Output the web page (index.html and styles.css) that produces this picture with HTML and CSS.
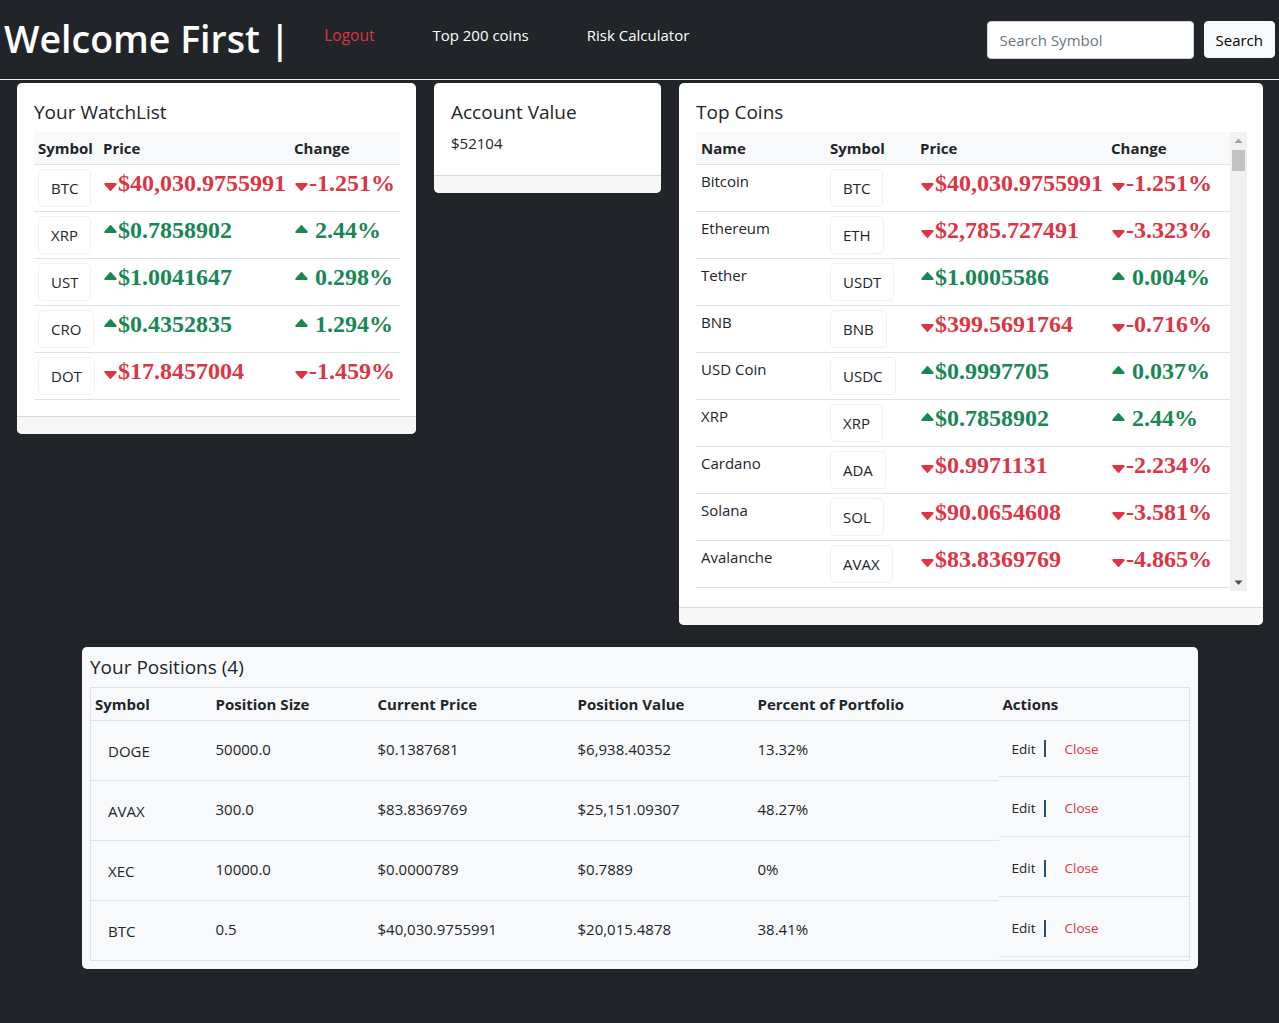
FILE: index.html
```html
<!DOCTYPE html>
<html lang="en">
<head>
<meta charset="utf-8">
<title>Welcome First</title>
<link rel="stylesheet" href="styles.css">
</head>
<body>
<nav class="navbar">
  <div class="brand">Welcome First |</div>
  <div class="nav-links">
    <a class="nav-link logout" href="#">Logout</a>
    <a class="nav-link" href="#">Top 200 coins</a>
    <a class="nav-link" href="#">Risk Calculator</a>
  </div>
  <form class="search">
    <input class="search-input" type="text" placeholder="Search Symbol">
    <button class="search-btn" type="button">Search</button>
  </form>
</nav>

<main class="main">
  <div class="card-row">
    <section class="card card-watch">
      <div class="card-body">
        <h5 class="card-title">Your WatchList</h5>
        <table class="tbl">
          <colgroup><col style="width:65px"><col style="width:191px"><col></colgroup>
          <thead><tr><th>Symbol</th><th>Price</th><th>Change</th></tr></thead>
          <tbody>
            <tr><td><span class="sym">BTC</span></td><td><span class="big down"><svg class="cd" viewBox="1.9 4 12.2 7.5"><path d="M7.247 11.14 2.451 5.658C1.885 5.013 2.345 4 3.204 4h9.592a1 1 0 0 1 .753 1.659l-4.796 5.48a1 1 0 0 1-1.506 0z"/></svg>$40,030.9755991</span></td><td><span class="big down"><svg class="cd" viewBox="1.9 4 12.2 7.5"><path d="M7.247 11.14 2.451 5.658C1.885 5.013 2.345 4 3.204 4h9.592a1 1 0 0 1 .753 1.659l-4.796 5.48a1 1 0 0 1-1.506 0z"/></svg>-1.251%</span></td></tr>
            <tr><td><span class="sym">XRP</span></td><td><span class="big up"><svg class="cu" viewBox="1.9 4.5 12.2 7.5"><path d="m7.247 4.86-4.796 5.481c-.566.647-.106 1.659.753 1.659h9.592a1 1 0 0 0 .753-1.659l-4.796-5.48a1 1 0 0 0-1.506 0z"/></svg>$0.7858902</span></td><td><span class="big up"><svg class="cu" viewBox="1.9 4.5 12.2 7.5"><path d="m7.247 4.86-4.796 5.481c-.566.647-.106 1.659.753 1.659h9.592a1 1 0 0 0 .753-1.659l-4.796-5.48a1 1 0 0 0-1.506 0z"/></svg> 2.44%</span></td></tr>
            <tr><td><span class="sym">UST</span></td><td><span class="big up"><svg class="cu" viewBox="1.9 4.5 12.2 7.5"><path d="m7.247 4.86-4.796 5.481c-.566.647-.106 1.659.753 1.659h9.592a1 1 0 0 0 .753-1.659l-4.796-5.48a1 1 0 0 0-1.506 0z"/></svg>$1.0041647</span></td><td><span class="big up"><svg class="cu" viewBox="1.9 4.5 12.2 7.5"><path d="m7.247 4.86-4.796 5.481c-.566.647-.106 1.659.753 1.659h9.592a1 1 0 0 0 .753-1.659l-4.796-5.48a1 1 0 0 0-1.506 0z"/></svg> 0.298%</span></td></tr>
            <tr><td><span class="sym">CRO</span></td><td><span class="big up"><svg class="cu" viewBox="1.9 4.5 12.2 7.5"><path d="m7.247 4.86-4.796 5.481c-.566.647-.106 1.659.753 1.659h9.592a1 1 0 0 0 .753-1.659l-4.796-5.48a1 1 0 0 0-1.506 0z"/></svg>$0.4352835</span></td><td><span class="big up"><svg class="cu" viewBox="1.9 4.5 12.2 7.5"><path d="m7.247 4.86-4.796 5.481c-.566.647-.106 1.659.753 1.659h9.592a1 1 0 0 0 .753-1.659l-4.796-5.48a1 1 0 0 0-1.506 0z"/></svg> 1.294%</span></td></tr>
            <tr><td><span class="sym">DOT</span></td><td><span class="big down"><svg class="cd" viewBox="1.9 4 12.2 7.5"><path d="M7.247 11.14 2.451 5.658C1.885 5.013 2.345 4 3.204 4h9.592a1 1 0 0 1 .753 1.659l-4.796 5.48a1 1 0 0 1-1.506 0z"/></svg>$17.8457004</span></td><td><span class="big down"><svg class="cd" viewBox="1.9 4 12.2 7.5"><path d="M7.247 11.14 2.451 5.658C1.885 5.013 2.345 4 3.204 4h9.592a1 1 0 0 1 .753 1.659l-4.796 5.48a1 1 0 0 1-1.506 0z"/></svg>-1.459%</span></td></tr>
          </tbody>
        </table>
      </div>
      <div class="card-footer"></div>
    </section>

    <section class="card card-account">
      <div class="card-body body-account">
        <h5 class="card-title">Account Value</h5>
        <p class="account-value">$52104</p>
      </div>
      <div class="card-footer"></div>
    </section>

    <section class="card card-top">
      <div class="card-body">
        <h5 class="card-title">Top Coins</h5>
        <div class="scroll-box">
          <div class="scroll-content">
            <table class="tbl">
              <colgroup><col style="width:130px"><col style="width:90px"><col style="width:191px"><col></colgroup>
              <thead><tr><th class="first">Name</th><th>Symbol</th><th>Price</th><th>Change</th></tr></thead>
              <tbody>
                <tr><td class="name">Bitcoin</td><td><span class="sym">BTC</span></td><td><span class="big down"><svg class="cd" viewBox="1.9 4 12.2 7.5"><path d="M7.247 11.14 2.451 5.658C1.885 5.013 2.345 4 3.204 4h9.592a1 1 0 0 1 .753 1.659l-4.796 5.48a1 1 0 0 1-1.506 0z"/></svg>$40,030.9755991</span></td><td><span class="big down"><svg class="cd" viewBox="1.9 4 12.2 7.5"><path d="M7.247 11.14 2.451 5.658C1.885 5.013 2.345 4 3.204 4h9.592a1 1 0 0 1 .753 1.659l-4.796 5.48a1 1 0 0 1-1.506 0z"/></svg>-1.251%</span></td></tr>
                <tr><td class="name">Ethereum</td><td><span class="sym">ETH</span></td><td><span class="big down"><svg class="cd" viewBox="1.9 4 12.2 7.5"><path d="M7.247 11.14 2.451 5.658C1.885 5.013 2.345 4 3.204 4h9.592a1 1 0 0 1 .753 1.659l-4.796 5.48a1 1 0 0 1-1.506 0z"/></svg>$2,785.727491</span></td><td><span class="big down"><svg class="cd" viewBox="1.9 4 12.2 7.5"><path d="M7.247 11.14 2.451 5.658C1.885 5.013 2.345 4 3.204 4h9.592a1 1 0 0 1 .753 1.659l-4.796 5.48a1 1 0 0 1-1.506 0z"/></svg>-3.323%</span></td></tr>
                <tr><td class="name">Tether</td><td><span class="sym">USDT</span></td><td><span class="big up"><svg class="cu" viewBox="1.9 4.5 12.2 7.5"><path d="m7.247 4.86-4.796 5.481c-.566.647-.106 1.659.753 1.659h9.592a1 1 0 0 0 .753-1.659l-4.796-5.48a1 1 0 0 0-1.506 0z"/></svg>$1.0005586</span></td><td><span class="big up"><svg class="cu" viewBox="1.9 4.5 12.2 7.5"><path d="m7.247 4.86-4.796 5.481c-.566.647-.106 1.659.753 1.659h9.592a1 1 0 0 0 .753-1.659l-4.796-5.48a1 1 0 0 0-1.506 0z"/></svg> 0.004%</span></td></tr>
                <tr><td class="name">BNB</td><td><span class="sym">BNB</span></td><td><span class="big down"><svg class="cd" viewBox="1.9 4 12.2 7.5"><path d="M7.247 11.14 2.451 5.658C1.885 5.013 2.345 4 3.204 4h9.592a1 1 0 0 1 .753 1.659l-4.796 5.48a1 1 0 0 1-1.506 0z"/></svg>$399.5691764</span></td><td><span class="big down"><svg class="cd" viewBox="1.9 4 12.2 7.5"><path d="M7.247 11.14 2.451 5.658C1.885 5.013 2.345 4 3.204 4h9.592a1 1 0 0 1 .753 1.659l-4.796 5.48a1 1 0 0 1-1.506 0z"/></svg>-0.716%</span></td></tr>
                <tr><td class="name">USD Coin</td><td><span class="sym">USDC</span></td><td><span class="big up"><svg class="cu" viewBox="1.9 4.5 12.2 7.5"><path d="m7.247 4.86-4.796 5.481c-.566.647-.106 1.659.753 1.659h9.592a1 1 0 0 0 .753-1.659l-4.796-5.48a1 1 0 0 0-1.506 0z"/></svg>$0.9997705</span></td><td><span class="big up"><svg class="cu" viewBox="1.9 4.5 12.2 7.5"><path d="m7.247 4.86-4.796 5.481c-.566.647-.106 1.659.753 1.659h9.592a1 1 0 0 0 .753-1.659l-4.796-5.48a1 1 0 0 0-1.506 0z"/></svg> 0.037%</span></td></tr>
                <tr><td class="name">XRP</td><td><span class="sym">XRP</span></td><td><span class="big up"><svg class="cu" viewBox="1.9 4.5 12.2 7.5"><path d="m7.247 4.86-4.796 5.481c-.566.647-.106 1.659.753 1.659h9.592a1 1 0 0 0 .753-1.659l-4.796-5.48a1 1 0 0 0-1.506 0z"/></svg>$0.7858902</span></td><td><span class="big up"><svg class="cu" viewBox="1.9 4.5 12.2 7.5"><path d="m7.247 4.86-4.796 5.481c-.566.647-.106 1.659.753 1.659h9.592a1 1 0 0 0 .753-1.659l-4.796-5.48a1 1 0 0 0-1.506 0z"/></svg> 2.44%</span></td></tr>
                <tr><td class="name">Cardano</td><td><span class="sym">ADA</span></td><td><span class="big down"><svg class="cd" viewBox="1.9 4 12.2 7.5"><path d="M7.247 11.14 2.451 5.658C1.885 5.013 2.345 4 3.204 4h9.592a1 1 0 0 1 .753 1.659l-4.796 5.48a1 1 0 0 1-1.506 0z"/></svg>$0.9971131</span></td><td><span class="big down"><svg class="cd" viewBox="1.9 4 12.2 7.5"><path d="M7.247 11.14 2.451 5.658C1.885 5.013 2.345 4 3.204 4h9.592a1 1 0 0 1 .753 1.659l-4.796 5.48a1 1 0 0 1-1.506 0z"/></svg>-2.234%</span></td></tr>
                <tr><td class="name">Solana</td><td><span class="sym">SOL</span></td><td><span class="big down"><svg class="cd" viewBox="1.9 4 12.2 7.5"><path d="M7.247 11.14 2.451 5.658C1.885 5.013 2.345 4 3.204 4h9.592a1 1 0 0 1 .753 1.659l-4.796 5.48a1 1 0 0 1-1.506 0z"/></svg>$90.0654608</span></td><td><span class="big down"><svg class="cd" viewBox="1.9 4 12.2 7.5"><path d="M7.247 11.14 2.451 5.658C1.885 5.013 2.345 4 3.204 4h9.592a1 1 0 0 1 .753 1.659l-4.796 5.48a1 1 0 0 1-1.506 0z"/></svg>-3.581%</span></td></tr>
                <tr><td class="name">Avalanche</td><td><span class="sym">AVAX</span></td><td><span class="big down"><svg class="cd" viewBox="1.9 4 12.2 7.5"><path d="M7.247 11.14 2.451 5.658C1.885 5.013 2.345 4 3.204 4h9.592a1 1 0 0 1 .753 1.659l-4.796 5.48a1 1 0 0 1-1.506 0z"/></svg>$83.8369769</span></td><td><span class="big down"><svg class="cd" viewBox="1.9 4 12.2 7.5"><path d="M7.247 11.14 2.451 5.658C1.885 5.013 2.345 4 3.204 4h9.592a1 1 0 0 1 .753 1.659l-4.796 5.48a1 1 0 0 1-1.506 0z"/></svg>-4.865%</span></td></tr>
              </tbody>
            </table>
          </div>
          <div class="fake-scrollbar">
            <svg class="sb-arrow" viewBox="0 0 17 17"><path d="M4.5 11h8L8.5 6.5z" fill="#a3a3a3"/></svg>
            <div class="sb-thumb"></div>
            <div class="sb-track"></div>
            <svg class="sb-arrow" viewBox="0 0 17 17"><path d="M4.5 6.5h8L8.5 11z" fill="#505050"/></svg>
          </div>
        </div>
      </div>
      <div class="card-footer"></div>
    </section>
  </div>

  <section class="card card-positions">
    <h5 class="card-title">Your Positions (4)</h5>
    <table class="pos">
      <colgroup><col style="width:121px"><col style="width:162px"><col style="width:200px"><col style="width:180px"><col style="width:245px"><col></colgroup>
      <thead><tr><th>Symbol</th><th>Position Size</th><th>Current Price</th><th>Position Value</th><th>Percent of Portfolio</th><th>Actions</th></tr></thead>
      <tbody>
        <tr><td><span class="sym plain">DOGE</span></td><td class="lift">50000.0</td><td class="lift">$0.1387681</td><td class="lift">$6,938.40352</td><td class="lift">13.32%</td><td class="act"><div class="act-inner"><a class="edit" href="#">Edit</a><span class="sep"></span><a class="close" href="#">Close</a></div></td></tr>
        <tr><td><span class="sym plain">AVAX</span></td><td class="lift">300.0</td><td class="lift">$83.8369769</td><td class="lift">$25,151.09307</td><td class="lift">48.27%</td><td class="act"><div class="act-inner"><a class="edit" href="#">Edit</a><span class="sep"></span><a class="close" href="#">Close</a></div></td></tr>
        <tr><td><span class="sym plain">XEC</span></td><td class="lift">10000.0</td><td class="lift">$0.0000789</td><td class="lift">$0.7889</td><td class="lift">0%</td><td class="act"><div class="act-inner"><a class="edit" href="#">Edit</a><span class="sep"></span><a class="close" href="#">Close</a></div></td></tr>
        <tr><td><span class="sym plain">BTC</span></td><td class="lift">0.5</td><td class="lift">$40,030.9755991</td><td class="lift">$20,015.4878</td><td class="lift">38.41%</td><td class="act"><div class="act-inner"><a class="edit" href="#">Edit</a><span class="sep"></span><a class="close" href="#">Close</a></div></td></tr>
      </tbody>
    </table>
  </section>
</main>
</body>
</html>
```
FILE: styles.css
```css
* { box-sizing: border-box; }

html, body {
  margin: 0;
  background: #212529;
}

body {
  font-family: "Open Sans", "Noto Sans", "DejaVu Sans", sans-serif;
  font-size: 15px;
  line-height: 24px;
  color: #212529;
  min-height: 1023px;
}

/* ---------- navbar ---------- */
.navbar {
  height: 80px;
  border-bottom: 1px solid #e9ecef;
  display: flex;
  align-items: center;
  padding: 0 4px 0 4px;
}

.brand {
  font-size: 37.5px;
  font-weight: 600;
  line-height: 48px;
  color: #fff;
  white-space: nowrap;
  margin-top: -2px;
}

.nav-links {
  display: flex;
  gap: 58px;
  margin-left: 34px;
  margin-top: -10px;
}

.nav-link {
  color: #fff;
  font-size: 15px;
  text-decoration: none;
}

.nav-link.logout { color: #dc3545; font-size: 15.5px; }

.search {
  margin: 0 0 0 auto;
  display: flex;
  align-items: center;
  gap: 10px;
}

.search-input {
  width: 207px;
  height: 38px;
  border: 1px solid #ced4da;
  border-radius: 4px;
  padding: 6px 12px;
  font-family: inherit;
  font-size: 15px;
  color: #212529;
  background: #fff;
}

.search-input::placeholder { color: #6c757d; }

.search-btn {
  height: 37px;
  padding: 5px 11px;
  border: 1px solid #f8f9fa;
  border-radius: 4px;
  background: #f8f9fa;
  color: #000;
  font-family: inherit;
  font-size: 15px;
}

/* ---------- layout ---------- */
.main {
  padding: 3px 0 0 0;
}

.card-row {
  display: flex;
  align-items: flex-start;
  gap: 18px;
  padding-left: 17px;
}

.card {
  background: #fff;
  border-radius: 5px;
  overflow: hidden;
}

.card-watch { width: 399px; }
.card-account { width: 227px; }
.card-top { width: 584px; }

.card-body {
  padding: 17px 16px 16px 17px;
}

.body-account { padding-bottom: 21px; }

.card-title {
  margin: 0 0 8px;
  font-size: 19px;
  font-weight: 500;
  line-height: 24px;
  color: #212529;
}

.card-footer {
  height: 18px;
  background: #f7f7f7;
  border-top: 1px solid #d9d9d9;
}

.account-value {
  margin: 0;
  font-size: 15px;
  line-height: 22px;
}

/* ---------- tables ---------- */
.tbl {
  width: 100%;
  border-collapse: collapse;
  table-layout: fixed;
}

.tbl th {
  text-align: left;
  font-weight: 700;
  font-size: 15px;
  padding: 4px 4px;
  line-height: 24px;
  background: #f8f9fa;
  border-bottom: 1px solid #dee2e6;
  white-space: nowrap;
}

.tbl th.first { padding-left: 5px; }

.tbl td {
  padding: 4px 4px;
  vertical-align: top;
  border-bottom: 1px solid #dee2e6;
  white-space: nowrap;
}

.tbl td.name {
  padding-left: 5px;
  font-size: 15px;
}

.sym {
  display: inline-block;
  padding: 6px 12px;
  line-height: 24px;
  border: 1px solid #f1f1f1;
  border-radius: 5px;
  font-size: 15px;
  color: #212529;
}

.big {
  font-family: "Liberation Serif", "Times New Roman", serif;
  font-weight: 700;
  font-size: 24px;
  line-height: 29px;
  display: inline-block;
}

.big.down { color: #dc3545; }
.big.up { color: #198754; }

.cd, .cu {
  width: 13px;
  height: 8px;
  fill: currentColor;
  margin: 0 1px 0 1px;
}

.cd { vertical-align: 0; }
.cu { vertical-align: 5px; }

/* ---------- top coins scroll ---------- */
.scroll-box {
  display: flex;
  height: 459px;
}

.scroll-content {
  flex: 1;
  overflow: hidden;
}

.fake-scrollbar {
  width: 17px;
  flex: none;
  background: #f1f1f1;
  display: flex;
  flex-direction: column;
}

.sb-arrow {
  width: 17px;
  height: 17px;
  flex: none;
}

.sb-thumb {
  height: 21px;
  margin: 1px 2px 0;
  background: #c1c1c1;
  flex: none;
}

.sb-track { flex: 1; }

/* ---------- positions ---------- */
.card-positions {
  width: 1116px;
  margin: 22px 0 0 82px;
  background: #f8f9fa;
  padding: 8px 8px 8px;
  border-radius: 5px;
}

.card-positions .card-title { margin-bottom: 8px; }

.pos {
  width: 100%;
  border-collapse: collapse;
  table-layout: fixed;
  border: 1px solid #dee2e6;
}

.pos th {
  text-align: left;
  font-weight: 700;
  font-size: 15px;
  line-height: 24px;
  padding: 4px 4px;
  border-bottom: 1px solid #dee2e6;
}

.pos td {
  height: 60px;
  padding: 0 4px;
  vertical-align: middle;
  border-bottom: 1px solid #dee2e6;
  font-size: 15px;
}

.pos td.lift { padding-bottom: 4px; }

.sym.plain {
  border-color: transparent;
  margin-top: 0;
}

.pos td.act {
  padding: 0;
  vertical-align: top;
  border-bottom: none;
}

.act-inner {
  height: 56px;
  border-bottom: 1px solid #dee2e6;
  display: flex;
  align-items: center;
  padding-left: 13px;
  font-size: 13.5px;
}

.edit {
  color: #212529;
  text-decoration: none;
}

.sep {
  width: 2px;
  height: 17px;
  background: #2b4f6e;
  margin: 0 18px 0 9px;
}

.close {
  color: #dc3545;
  text-decoration: none;
}
```
